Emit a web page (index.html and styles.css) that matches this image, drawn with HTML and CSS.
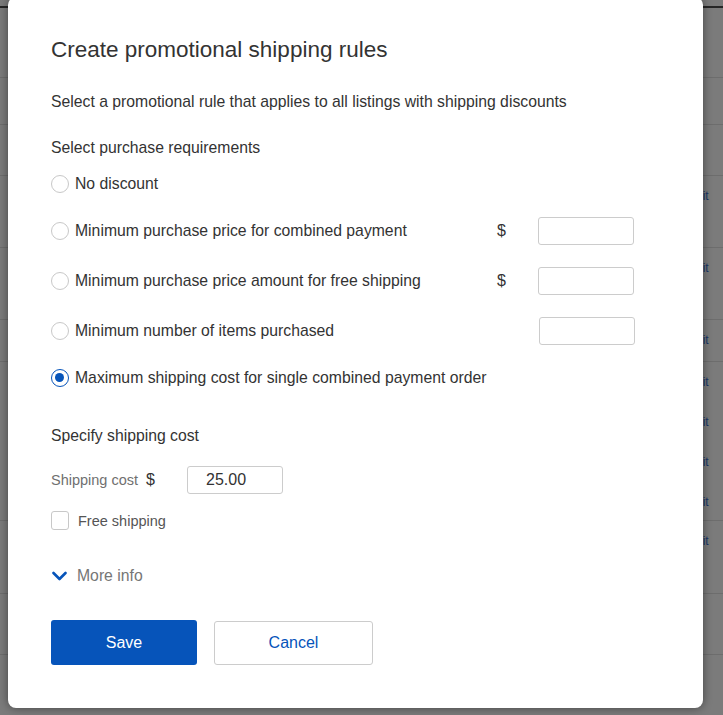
FILE: index.html
```html
<!DOCTYPE html>
<html lang="en">
<head>
  <meta charset="UTF-8" />
  <title>Create promotional shipping rules</title>
<link rel="stylesheet" href="styles.css">
</head>
<body>
<div class="backdrop">
  <div class="topbar"></div>
  <div class="row h70"></div>
  <div class="row h47"></div>
  <div class="row h51"></div>
  <div class="row h72"><span class="link">Edit</span></div>
  <div class="row h72"><span class="link">Edit</span></div>
  <div class="row h42"><span class="link">Edit</span></div>
  <div class="row h159 stack">
    <span class="link">Edit</span>
    <span class="link">Edit</span>
    <span class="link">Edit</span>
    <span class="link">Edit</span>
  </div>
  <div class="row h73"><span class="link">Edit</span></div>
  <div class="row h61"></div>
</div>

<div class="modal">
  <h1 class="title">Create promotional shipping rules</h1>
  <p class="intro">Select a promotional rule that applies to all listings with shipping discounts</p>

  <div class="section-label">Select purchase requirements</div>
  <div class="options">
    <div class="option">
      <span class="radio"></span>
      <span class="opt-text">No discount</span>
    </div>
    <div class="option tall">
      <span class="radio"></span>
      <span class="opt-text">Minimum purchase price for combined payment</span>
      <span class="currency">$</span>
      <input class="field" type="text">
    </div>
    <div class="option tall">
      <span class="radio"></span>
      <span class="opt-text">Minimum purchase price amount for free shipping</span>
      <span class="currency">$</span>
      <input class="field" type="text">
    </div>
    <div class="option tall">
      <span class="radio"></span>
      <span class="opt-text">Minimum number of items purchased</span>
      <span class="currency"></span>
      <input class="field shift" type="text">
    </div>
    <div class="option">
      <span class="radio on"></span>
      <span class="opt-text">Maximum shipping cost for single combined payment order</span>
    </div>
  </div>

  <div class="section-label spaced">Specify shipping cost</div>
  <div class="cost-row">
    <span class="cost-label">Shipping cost</span>
    <span class="cost-currency">$</span>
    <input class="field cost" type="text" value="25.00">
  </div>
  <div class="check-row">
    <span class="checkbox"></span>
    <span class="check-text">Free shipping</span>
  </div>

  <div class="more">
    <svg class="chevron" width="15" height="10" viewBox="0 0 15 10">
      <polyline points="1.5,2 7.5,8 13.5,2" fill="none" stroke="#0654ba" stroke-width="2.6" stroke-linecap="round" stroke-linejoin="round"/>
    </svg>
    <span class="more-text">More info</span>
  </div>

  <div class="actions">
    <button class="btn primary">Save</button>
    <button class="btn secondary">Cancel</button>
  </div>
</div>
</body>
</html>
```

FILE: styles.css
```css
body {
  margin: 0;
  font-family: "Liberation Sans", Arial, sans-serif;
  color: #333;
  background: #7b7b7b;
  overflow: hidden;
}

/* dimmed page behind the dialog */
.backdrop {
  height: 715px;
  background: #7b7b7b;
}

.topbar {
  height: 6px;
  border-bottom: 2px solid #262626;
}

.row {
  box-sizing: border-box;
  border-bottom: 1px solid #6d6d6d;
  padding: 13px 0 0 688px;
}

.h70 { height: 70px; }
.h47 { height: 47px; }
.h51 { height: 51px; }
.h72 { height: 72px; }
.h42 { height: 42px; }
.h159 { height: 159px; }
.h73 { height: 73px; }
.h61 { height: 61px; }

.stack {
  display: flex;
  flex-direction: column;
  gap: 26px;
}

.link {
  display: block;
  font-size: 12px;
  line-height: 14px;
  color: #1a3566;
}

/* dialog */
.modal {
  position: absolute;
  left: 8px;
  top: -3px;
  width: 695px;
  height: 711px;
  box-sizing: border-box;
  padding: 39px 43px 0;
  background: #fff;
  border-radius: 8px;
  box-shadow: 0 0 10px rgba(0, 0, 0, 0.45);
}

.title {
  margin: 0;
  font-size: 22.5px;
  line-height: 28px;
  font-weight: normal;
  color: #333;
}

.intro {
  margin: 28px 0 0;
  font-size: 15.75px;
  line-height: 20px;
}

.section-label {
  margin-top: 26px;
  font-size: 15.75px;
  line-height: 20px;
}

.section-label.spaced {
  margin-top: 37px;
}

.options {
  display: flex;
  flex-direction: column;
  gap: 22px;
  margin-top: 15px;
}

.option {
  display: grid;
  grid-template-columns: 24px 422px 41px 96px;
  align-items: center;
  min-height: 22px;
}

.option.tall {
  min-height: 28px;
}

.radio {
  box-sizing: border-box;
  width: 18px;
  height: 18px;
  border: 1px solid #c8c8c8;
  border-radius: 50%;
  position: relative;
}

.radio.on {
  border: 1.5px solid #0654ba;
}

.radio.on::after {
  content: "";
  position: absolute;
  left: 3px;
  top: 3px;
  width: 9px;
  height: 9px;
  border-radius: 50%;
  background: #0654ba;
}

.opt-text {
  font-size: 15.75px;
  line-height: 20px;
}

.currency {
  font-size: 16px;
}

.field {
  box-sizing: border-box;
  width: 96px;
  height: 28px;
  margin: 0;
  border: 1px solid #ccc;
  border-radius: 3px;
  padding: 0 0 0 18px;
  font-family: inherit;
  font-size: 16px;
  color: #333;
  background: #fff;
}

.field.shift {
  margin-left: 1px;
}

.cost-row {
  display: flex;
  align-items: center;
  margin-top: 20px;
  height: 28px;
}

.cost-label {
  font-size: 14.5px;
  color: #707070;
  width: 95px;
}

.cost-currency {
  font-size: 16px;
  width: 41px;
}

.check-row {
  display: flex;
  align-items: center;
  margin-top: 17px;
  height: 19px;
}

.checkbox {
  box-sizing: border-box;
  width: 18px;
  height: 19px;
  border: 1px solid #c8c8c8;
  border-radius: 3px;
  margin-right: 9px;
}

.check-text {
  font-size: 14.5px;
  color: #555;
}

.more {
  display: flex;
  align-items: center;
  gap: 10px;
  margin-top: 36px;
  height: 20px;
  padding-left: 1px;
}

.more-text {
  font-size: 15.75px;
  color: #767676;
}

.actions {
  display: flex;
  align-items: flex-end;
  gap: 17px;
  margin-top: 34px;
}

.btn {
  font-family: inherit;
  font-size: 16px;
  border-radius: 3px;
  cursor: pointer;
}

.primary {
  width: 146px;
  height: 45px;
  border: none;
  background: #0654ba;
  color: #fff;
}

.secondary {
  width: 159px;
  height: 44px;
  border: 1px solid #ccc;
  background: #fff;
  color: #0654ba;
}
```
